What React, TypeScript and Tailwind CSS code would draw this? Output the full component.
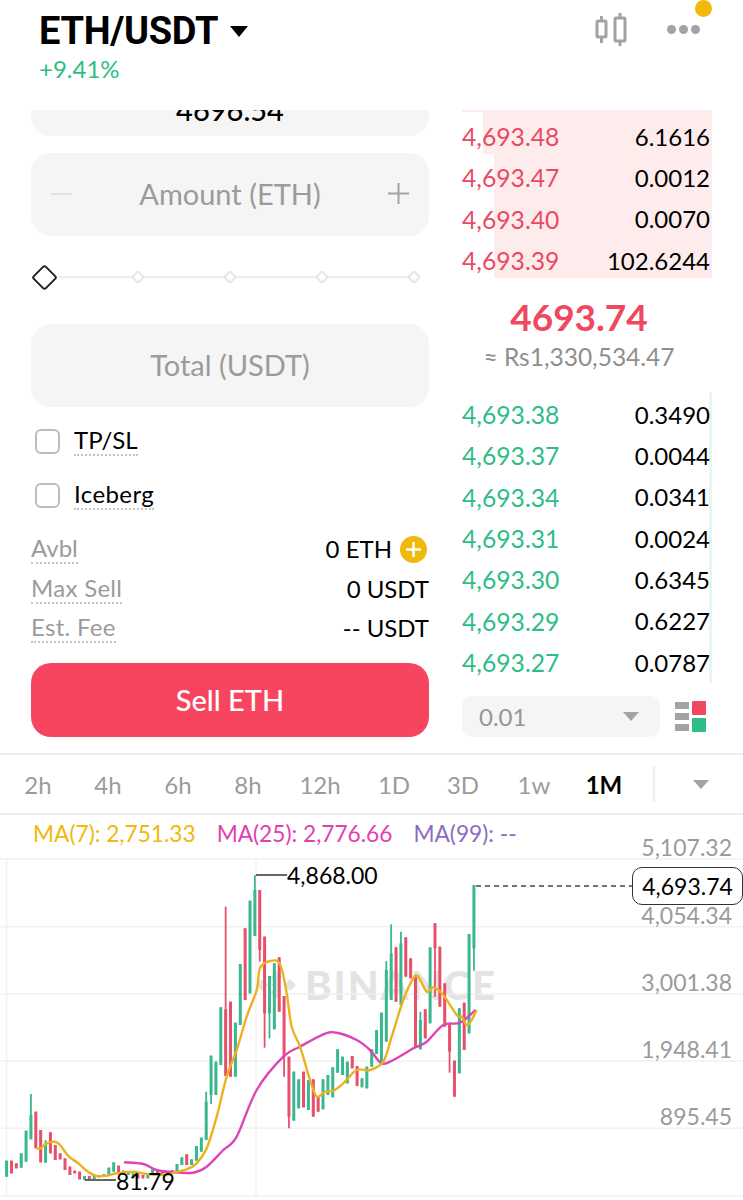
import React from "react";

type C = [string, number, number, number?, number?];
// wick top, wick bottom, body top, body bottom (3x zoomed y, relative to page y=850)
const A: C[] = [
  ["g",932,980],["r",932,970],["r",940,955],["g",910,953],["g",842,935],["g",732,868,795,868],["r",785,895],["r",840,937],["g",870,938,880,938],["r",847,910],
  ["r",885,930],["r",910,928],["r",925,960],["r",950,975],["r",962,970],["r",965,988],["g",978,990],["r",978,988],["g",975,987],["g",975,982],
  ["g",972,980],["g",953,975],["g",937,965],["r",947,970],["r",962,975],["g",965,975],["g",970,985],["r",972,985],["r",975,985],["g",975,985],
  ["g",955,975],["r",960,975],["r",960,975],["g",965,975],["r",960,972],["g",942,965],["g",922,945],["r",913,945],["g",928,945],["g",888,932],
  ["g",863,905],["g",725,870,755,870],["g",617,762,617,735],["g",635,735],["g",472,645],["r",170,678,478,678],["r",455,680],["g",518,680],["g",342,525],["r",235,450],
  ["g",152,430],["g",75,258,120,258],["r",120,335,120,300],["r",260,593,260,490],["g",378,565,378,490],["g",340,538],["r",322,485],["r",438,680,438,620],["r",620,835,620,800],["g",665,812],
  ["g",688,775],["r",665,772],["g",690,780],["r",688,800],["r",740,785],["g",688,778],["g",675,735],["g",652,742],["g",598,668],["g",620,675],
  ["g",635,700],["r",618,655],["r",648,708],["g",685,712],["g",650,715],["g",598,650],["g",540,612],["g",488,640],["g",333,575,360,575],["g",223,450,310,450],
  ["r",292,455],["g",245,465,280,465],["r",262,380],["r",325,385],["r",380,590],["g",485,598,510,598],["r",478,565],["g",292,520],["r",220,440,220,295],["r",290,470],
  ["r",400,530],["r",520,668,520,605],["r",632,740],["g",475,670],["r",458,600],["g",252,550],["g",105,362,105,295],
];

const ma7 = [[108,895],[122,895],[140,880],[165,875],[180,885],[205,918],[235,940],[260,962],[290,978],[320,977],[350,970],[400,965],[440,972],[500,975],[520,968],[560,958],[590,940],[620,895],[650,800],[680,680],[710,600],[740,500],[770,420],[780,355],[810,333],[840,343],[860,430],[875,530],[900,590],[930,690],[950,740],[975,725],[1000,722],[1030,700],[1070,660],[1110,660],[1150,635],[1175,560],[1210,450],[1240,385],[1255,380],[1280,425],[1300,412],[1330,435],[1370,495],[1385,500],[1400,525],[1415,510],[1430,480]];
const ma25 = [[372,937],[430,942],[470,960],[520,967],[580,968],[620,950],[670,900],[710,860],[770,720],[850,620],[900,590],[970,553],[1010,548],[1070,570],[1110,600],[1145,640],[1180,630],[1240,595],[1280,575],[1330,525],[1380,518],[1427,480]];
// Catmull-Rom smoothing through the traced points
const smooth = (a: number[][]) => {
  const p = a.map(([x, y]) => [x / 3, 850 + y / 3]);
  let d = `M${p[0][0].toFixed(1)} ${p[0][1].toFixed(1)}`;
  for (let i = 0; i < p.length - 1; i++) {
    const p0 = p[Math.max(i - 1, 0)], p1 = p[i], p2 = p[i + 1], p3 = p[Math.min(i + 2, p.length - 1)];
    const c1x = p1[0] + (p2[0] - p0[0]) / 6, c1y = p1[1] + (p2[1] - p0[1]) / 6;
    const c2x = p2[0] - (p3[0] - p1[0]) / 6, c2y = p2[1] - (p3[1] - p1[1]) / 6;
    d += `C${c1x.toFixed(1)} ${c1y.toFixed(1)} ${c2x.toFixed(1)} ${c2y.toFixed(1)} ${p2[0].toFixed(1)} ${p2[1].toFixed(1)}`;
  }
  return d;
};

const asks = [["4,693.48","6.1616"],["4,693.47","0.0012"],["4,693.40","0.0070"],["4,693.39","102.6244"]];
const bids = [["4,693.38","0.3490"],["4,693.37","0.0044"],["4,693.34","0.0341"],["4,693.31","0.0024"],["4,693.30","0.6345"],["4,693.29","0.6227"],["4,693.27","0.0787"]];
const axis = [["5,107.32",833],["4,054.34",901],["3,001.38",968],["1,948.41",1035],["895.45",1102]] as const;

function Dotted({ children, className }: { children: React.ReactNode; className: string }) {
  return <span className={`border-b-2 border-dotted border-[#c4c4c4] leading-[28px] ${className}`}>{children}</span>;
}

function Tri({ className }: { className: string }) {
  return <div className={`w-0 h-0 border-x-[8px] border-x-transparent border-t-[9px] ${className}`} />;
}

export default function App() {
  return (
    <div className="w-[743px] h-[1200px] bg-white overflow-hidden font-['Lato','Liberation_Sans',sans-serif] text-black">
      {/* header */}
      <header className="h-[110px] flex justify-between relative">
        <div className="pl-[39px] pt-[10px]">
          <div className="flex items-center gap-[12px]">
            <h1 className="text-[38px] leading-[42px] font-bold font-['Roboto',sans-serif] tracking-[-0.3px]">ETH/USDT</h1>
            <div className="w-0 h-0 border-x-[9px] border-x-transparent border-t-[11px] border-t-black" />
          </div>
          <div className="text-[24px] leading-[28px] mt-[3px] text-[#2ebd85]">+9.41%</div>
        </div>
        <div className="flex items-start pt-[13px] pr-[43px] gap-[39px]">
          <svg width="34" height="34" viewBox="0 0 34 34" fill="none" stroke="#a3a3a3" strokeWidth="3">
            <rect x="3" y="8" width="9" height="16" rx="1" />
            <rect x="21" y="5" width="10" height="23" rx="1" />
            <path d="M7.5 3v5M7.5 24v6M26 0v5M26 28v5" />
          </svg>
          <div className="flex gap-[3px] mt-[12px]">
            <span className="w-[9px] h-[9px] rounded-full bg-[#a3a3a3]" />
            <span className="w-[9px] h-[9px] rounded-full bg-[#a3a3a3]" />
            <span className="w-[9px] h-[9px] rounded-full bg-[#a3a3a3]" />
          </div>
        </div>
        <span className="absolute left-[695px] top-0 w-[17px] h-[17px] rounded-full bg-[#f0b90b]" />
      </header>

      {/* trade */}
      <section className="h-[645px] overflow-hidden flex border-b-2 border-[#eeeeee] box-border">
        <div className="w-[398px] ml-[31px] shrink-0">
          <div className="h-[83px] -mt-[57px] pt-[31px] rounded-[20px] bg-[#f5f5f5] flex items-center justify-center text-[29px] font-medium">4696.54</div>
          <div className="h-[83px] mt-[17px] pb-[2px] rounded-[20px] bg-[#f5f5f5] flex items-center justify-between px-[20px] text-[29px] text-[#9b9b9b]">
            <span className="w-[21px] h-[2px] bg-[#e0e0e0]" />
            <span>Amount (ETH)</span>
            <svg width="21" height="21" viewBox="0 0 21 21" stroke="#a3a3a3" strokeWidth="2"><path d="M0 10.5h21M10.5 0v21" /></svg>
          </div>
          <div className="h-[40px] mt-[21px] relative flex items-center justify-between">
            <div className="w-[26px] h-[26px] flex items-center justify-center">
              <span className="w-[19px] h-[19px] rotate-45 border-2 border-[#1e2329] rounded-[3px] bg-white" />
            </div>
            <div className="flex-1 h-[2px] bg-[#eeeeee] ml-[1px] mr-[10px] relative flex justify-end items-center gap-[82px]">
              {[0,1,2,3].map((i) => <span key={i} className="w-[10px] h-[10px] rotate-45 border-2 border-[#e6e6e6] bg-white rounded-[2px]" />)}
            </div>
          </div>
          <div className="h-[83px] mt-[27px] pb-[2px] rounded-[20px] bg-[#f5f5f5] flex items-center justify-center text-[29px] text-[#9b9b9b]">Total (USDT)</div>
          <div className="mt-[20px] pl-[4px] flex items-center gap-[14px] h-[28px] text-[24px]">
            <span className="w-[25px] h-[25px] border-2 border-[#bdbdbd] rounded-[6px] box-border" />
            <Dotted className="">TP/SL</Dotted>
          </div>
          <div className="mt-[26px] pl-[4px] flex items-center gap-[14px] h-[28px] text-[24px]">
            <span className="w-[25px] h-[25px] border-2 border-[#bdbdbd] rounded-[6px] box-border" />
            <Dotted className="tracking-[0.4px]">Iceberg</Dotted>
          </div>
          <div className="mt-[25px] text-[24px]">
            <div className="h-[40px] flex justify-between items-start">
              <Dotted className="text-[#9b9b9b]">Avbl</Dotted>
              <div className="flex items-center gap-[8px] -mt-[3px] pr-[2px]">
                <span>0 ETH</span>
                <span className="w-[27px] h-[27px] rounded-full bg-[#f0b90b] flex items-center justify-center">
                  <svg width="15" height="15" viewBox="0 0 15 15" stroke="#fff" strokeWidth="2.5"><path d="M0 7.5h15M7.5 0v15" /></svg>
                </span>
              </div>
            </div>
            <div className="h-[39px] flex justify-between items-start">
              <Dotted className="text-[#9b9b9b] tracking-[0.3px]">Max Sell</Dotted>
              <span className="-mt-[3px]">0 USDT</span>
            </div>
            <div className="h-[39px] flex justify-between items-start">
              <Dotted className="text-[#9b9b9b] tracking-[0.3px]">Est. Fee</Dotted>
              <span className="-mt-[3px]">-- USDT</span>
            </div>
          </div>
          <button className="w-full h-[74px] mt-[11px] rounded-[20px] bg-[#f8455f] text-white text-[29px] font-medium">Sell ETH</button>
        </div>

        <div className="w-[250px] ml-[33px] shrink-0 relative">
          <div className="relative h-[168px] pt-[6px] text-[24px]">
            <div className="absolute left-[32px] right-0 top-[0px] bottom-0 bg-[#feeced]" />
            <div className="absolute left-[21px] right-0 top-[0px] h-[44px] bg-[#feeced]" />
            <div className="absolute left-0 right-0 top-[0px] h-[2px] bg-[#feeced]" />
            <div className="relative">
              {asks.map(([p, q]) => (
                <div key={p} className="h-[41.3px] flex justify-between items-center pr-[2px]">
                  <span className="text-[#e84a63] text-[24.7px]">{p}</span><span>{q}</span>
                </div>
              ))}
            </div>
          </div>
          <div className="text-center pr-[16px] mt-[17px]">
            <div className="text-[37px] leading-[44px] font-bold text-[#f0485f]">4693.74</div>
            <div className="text-[24.5px] leading-[28px] mt-[4px] text-[#8f8f8f]">≈ Rs1,330,534.47</div>
          </div>
          <div className="relative text-[24px] mt-[23px]">
            <div className="absolute right-0 top-[-2px] bottom-0 w-[3px] bg-[#e6f6f0]" />
            {bids.map(([p, q]) => (
              <div key={p} className="relative h-[41.33px] flex justify-between items-center pr-[2px]">
                <span className="text-[#2ebd85] text-[24.7px]">{p}</span><span>{q}</span>
              </div>
            ))}
          </div>
          <div className="mt-[13px] flex items-center">
            <div className="w-[198px] h-[41px] rounded-[10px] bg-[#f5f5f5] flex items-center justify-between pl-[17px] pr-[21px] text-[24px] text-[#969696]">
              <span>0.01</span>
              <Tri className="border-t-[#a3a3a3]" />
            </div>
            <div className="ml-[15px] flex gap-[3px]">
              <div className="flex flex-col gap-[4px] py-[1px]">
                <span className="w-[14px] h-[7px] bg-[#a3a3a3]" />
                <span className="w-[14px] h-[7px] bg-[#a3a3a3]" />
                <span className="w-[14px] h-[7px] bg-[#a3a3a3]" />
              </div>
              <div className="flex flex-col gap-[3px]">
                <span className="w-[14px] h-[14px] rounded-[1px] bg-[#f0485f]" />
                <span className="w-[14px] h-[14px] rounded-[1px] bg-[#2ebd85]" />
              </div>
            </div>
          </div>
        </div>
      </section>

      {/* tabs */}
      <nav className="h-[60px] border-b-2 border-[#eeeeee] box-border flex items-center text-[24px] text-[#9b9b9b]">
        <div className="flex w-[653px] h-[36px] items-center pl-[3px] text-center pt-[2px]">
          <span className="w-[70px]">2h</span><span className="w-[70px]">4h</span><span className="w-[70px]">6h</span><span className="w-[70px]">8h</span>
          <span className="w-[74px]">12h</span><span className="w-[74px]">1D</span><span className="w-[64px]">3D</span><span className="w-[78px]">1w</span>
          <span className="w-[62px] text-black font-bold">1M</span>
        </div>
        <span className="h-[36px] border-l-2 border-[#eeeeee]" />
        <div className="ml-[38px]"><Tri className="border-t-[#a3a3a3]" /></div>
      </nav>

      {/* chart */}
      <div className="relative h-[385px] overflow-hidden">
        <div className="relative z-10 pl-[33px] pt-[5px] flex gap-[21px] text-[22.7px] leading-[28px]">
          <span className="text-[#f0b90b]">MA(7): 2,751.33</span>
          <span className="text-[#e040b0]">MA(25): 2,776.66</span>
          <span className="text-[#8a6cc0]">MA(99): --</span>
        </div>
        <div className="absolute left-[305px] top-[146px] text-[40px] leading-[48px] font-black text-[#e3e3e3] tracking-[2px]">BINANCE</div>
        <svg className="absolute left-0 top-0" width="743" height="385" viewBox="0 815 743 385" fill="none">
          {[859, 926.7, 994, 1061, 1128.3, 1196].map((y) => <path key={y} d={`M0 ${y}H743`} stroke="#f1f1f1" strokeWidth="1.5" />)}
          <path d="M6.5 859V1196M256 859V1196" stroke="#f1f1f1" strokeWidth="1.5" />
          <g fill="#e3e3e3"><path d="M276 971l6 6-6 6-6-6zM276 987l6 6-6 6-6-6zM262 979l6 6-6 6-6-6zM290 979l6 6-6 6-6-6zM276 980l5 5-5 5-5-5z" /></g>
          {A.map((c, i) => {
            const x = 6.6 + i * 4.868;
            const col = c[0] === "g" ? "#3bb78f" : "#e8506a";
            const y1 = 850 + c[1] / 3, y2 = 850 + c[2] / 3;
            const b1 = 850 + (c[3] ?? c[1]) / 3, b2 = 850 + (c[4] ?? c[2]) / 3;
            return (
              <g key={i} stroke={col}>
                <path d={`M${x} ${y1}V${y2}`} strokeWidth="1.8" />
                <path d={`M${x} ${b1}V${b2}`} strokeWidth="3" />
              </g>
            );
          })}
          <path d={smooth(ma25)} stroke="#dc45b5" strokeWidth="2.4" strokeLinejoin="round" />
          <path d={smooth(ma7)} stroke="#ecb11f" strokeWidth="2.4" strokeLinejoin="round" />
          <path d="M256 875H287M85 1180H116" stroke="#333" strokeWidth="1.5" />
          <path d="M476 886H632" stroke="#444" strokeWidth="1.5" strokeDasharray="5 4" />
        </svg>
        {axis.map(([t, y]) => (
          <div key={t} style={{ top: y - 815 }} className="absolute right-[11px] leading-[28px] text-[23px] text-[#9b9b9b]">{t}</div>
        ))}
        <div className="absolute left-[632px] top-[52px] w-[111px] h-[38px] rounded-[10px] border border-[#333] bg-white flex items-center justify-center text-[23px]">4,693.74</div>
        <div className="absolute left-[287px] top-[46px] text-[23px] leading-[28px]">4,868.00</div>
        <div className="absolute left-[116px] top-[352px] text-[23px] leading-[28px]">81.79</div>
      </div>
    </div>
  );
}
